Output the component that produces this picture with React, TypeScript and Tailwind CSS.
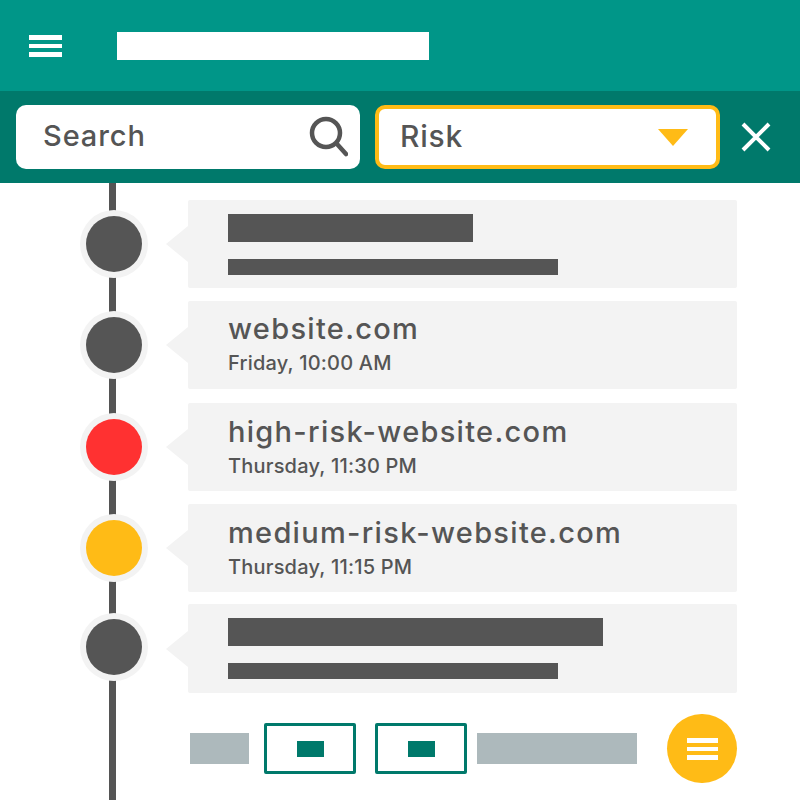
import React from 'react';

interface TimelineItem {
  dot: string;
  rowClass: string;
  cardClass: string;
  ringClass?: string;
  title?: string;
  time?: string;
  titleBarClass?: string;
}

const items: TimelineItem[] = [
  { dot: 'bg-[#555555]', rowClass: '', cardClass: 'h-[88px]', titleBarClass: 'w-[245px]' },
  { dot: 'bg-[#555555]', rowClass: 'mt-[13px]', cardClass: 'h-[88px] pb-[3px]', title: 'website.com', time: 'Friday, 10:00 AM' },
  { dot: 'bg-[#ff3131]', rowClass: 'mt-[14px]', cardClass: 'h-[88px] pb-[1px]', ringClass: 'mb-[1px]', title: 'high-risk-website.com', time: 'Thursday, 11:30 PM' },
  { dot: 'bg-[#ffbb16]', rowClass: 'mt-[13px]', cardClass: 'h-[88px] pb-[1px]', ringClass: 'mb-[1px]', title: 'medium-risk-website.com', time: 'Thursday, 11:15 PM' },
  { dot: 'bg-[#555555]', rowClass: 'mt-[12px]', cardClass: 'h-[89px]', ringClass: 'mb-[3px]', titleBarClass: 'w-[375px]' },
];

const Bars: React.FC<{ className: string }> = ({ className }) => (
  <div className={`flex flex-col ${className}`}>
    <div className="h-[5px] bg-white" />
    <div className="h-[4px] bg-white mt-[4px]" />
    <div className="h-[5px] bg-white mt-[4px]" />
  </div>
);

const Row: React.FC<{ item: TimelineItem }> = ({ item }) => (
  <div className={`relative flex items-center pl-[80px] ${item.rowClass}`}>
    <div className={`w-[68px] h-[68px] rounded-full bg-[#f3f3f3] flex items-center justify-center ${item.ringClass ?? ''}`}>
      <div className={`w-[56px] h-[56px] rounded-full ${item.dot}`} />
    </div>
    <div className="ml-[18px] w-0 h-0 border-y-[18px] border-y-transparent border-r-[22px] border-r-[#f3f3f3]" />
    <div className={`w-[549px] bg-[#f3f3f3] rounded-[2px] pl-[40px] flex flex-col justify-center ${item.cardClass}`}>
      {item.title ? (
        <>
          <div className="text-[29px] leading-[36px] font-[550] text-[#555555] tracking-[1.3px]">{item.title}</div>
          <div className="text-[20px] leading-[26px] font-[550] text-[#555555] tracking-[0.2px] mt-[3px]">{item.time}</div>
        </>
      ) : (
        <>
          <div className={`h-[28px] bg-[#555555] ${item.titleBarClass}`} />
          <div className="h-[16px] w-[330px] bg-[#555555] mt-[17px]" />
        </>
      )}
    </div>
  </div>
);

const App: React.FC = () => {
  return (
    <div className="w-[800px] h-[800px] overflow-hidden bg-white font-['Inter',sans-serif]">
      {/* Header */}
      <div className="h-[91px] bg-[#009688] flex items-center pl-[29px]">
        <Bars className="w-[33px]" />
        <div className="ml-[55px] w-[312px] h-[28px] bg-white" />
      </div>

      {/* Filters */}
      <div className="h-[92px] bg-[#00796b] flex items-center pl-[16px]">
        <div className="w-[344px] h-[64px] bg-white rounded-[10px] flex items-center justify-between pl-[27px] pr-[12px]">
          <span className="text-[29px] leading-[40px] pb-[2px] font-[550] text-[#555555] tracking-[0.9px]">Search</span>
          <svg width="40" height="42" viewBox="0 0 40 42" fill="none" stroke="#555555" strokeWidth="4.5" strokeLinecap="round">
            <circle cx="18" cy="17" r="14" />
            <path d="M29 28 L38 38" />
          </svg>
        </div>
        <div className="ml-[15px] w-[345px] h-[64px] bg-white rounded-[10px] border-[4px] border-[#ffbb16] flex items-center justify-between pl-[21px] pr-[28px]">
          <span className="text-[30px] leading-[40px] pb-[2px] font-[550] text-[#555555] tracking-[0.8px]">Risk</span>
          <div className="w-0 h-0 border-x-[15px] border-x-transparent border-t-[17px] border-t-[#ffbb16]" />
        </div>
        <svg className="ml-[20px]" width="32" height="32" viewBox="0 0 32 32" fill="none" stroke="#ffffff" strokeWidth="4">
          <path d="M3 3 L29 29 M29 3 L3 29" />
        </svg>
      </div>

      {/* Timeline */}
      <div className="relative h-[617px] pt-[17px]">
        <div className="absolute left-[109px] top-0 bottom-0 w-[7px] bg-[#555555]" />
        {items.map((item, i) => (
          <Row key={i} item={item} />
        ))}

        {/* Pagination */}
        <div className="relative flex items-center pl-[190px] mt-[21px]">
          <div className="w-[59px] h-[31px] bg-[#adb9bc]" />
          <div className="ml-[15px] w-[92px] h-[51px] border-[3px] border-[#00796b] rounded-[2px] flex items-center justify-center">
            <div className="w-[27px] h-[16px] bg-[#00796b]" />
          </div>
          <div className="ml-[19px] w-[92px] h-[51px] border-[3px] border-[#00796b] rounded-[2px] flex items-center justify-center">
            <div className="w-[27px] h-[16px] bg-[#00796b]" />
          </div>
          <div className="ml-[10px] w-[160px] h-[31px] bg-[#adb9bc]" />
          <div className="ml-[30px] w-[70px] h-[69px] rounded-full bg-[#ffbb16] flex items-center justify-center">
            <Bars className="w-[31px]" />
          </div>
        </div>
      </div>
    </div>
  );
};

export default App;
